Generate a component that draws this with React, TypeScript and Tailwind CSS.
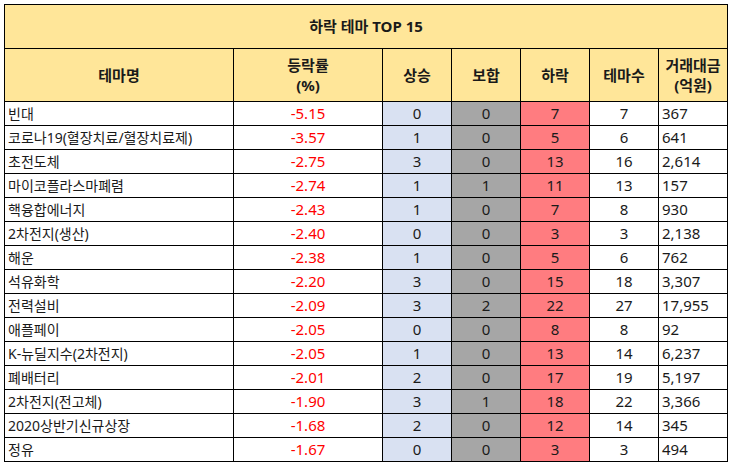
import React from "react";

type Row = { name: string; rate: string; up: number; flat: number; down: number; count: number; amount: string };

const rows: Row[] = [
  { name: "빈대", rate: "-5.15", up: 0, flat: 0, down: 7, count: 7, amount: "367" },
  { name: "코로나19(혈장치료/혈장치료제)", rate: "-3.57", up: 1, flat: 0, down: 5, count: 6, amount: "641" },
  { name: "초전도체", rate: "-2.75", up: 3, flat: 0, down: 13, count: 16, amount: "2,614" },
  { name: "마이코플라스마폐렴", rate: "-2.74", up: 1, flat: 1, down: 11, count: 13, amount: "157" },
  { name: "핵융합에너지", rate: "-2.43", up: 1, flat: 0, down: 7, count: 8, amount: "930" },
  { name: "2차전지(생산)", rate: "-2.40", up: 0, flat: 0, down: 3, count: 3, amount: "2,138" },
  { name: "해운", rate: "-2.38", up: 1, flat: 0, down: 5, count: 6, amount: "762" },
  { name: "석유화학", rate: "-2.20", up: 3, flat: 0, down: 15, count: 18, amount: "3,307" },
  { name: "전력설비", rate: "-2.09", up: 3, flat: 2, down: 22, count: 27, amount: "17,955" },
  { name: "애플페이", rate: "-2.05", up: 0, flat: 0, down: 8, count: 8, amount: "92" },
  { name: "K-뉴딜지수(2차전지)", rate: "-2.05", up: 1, flat: 0, down: 13, count: 14, amount: "6,237" },
  { name: "폐배터리", rate: "-2.01", up: 2, flat: 0, down: 17, count: 19, amount: "5,197" },
  { name: "2차전지(전고체)", rate: "-1.90", up: 3, flat: 1, down: 18, count: 22, amount: "3,366" },
  { name: "2020상반기신규상장", rate: "-1.68", up: 2, flat: 0, down: 12, count: 14, amount: "345" },
  { name: "정유", rate: "-1.67", up: 0, flat: 0, down: 3, count: 3, amount: "494" },
];

const cell = "border border-black h-[24px] p-0 leading-none text-[15px]";

export default function App() {
  return (
    <div className="w-[732px] h-[466px] bg-white pl-[4px] pt-[4px] text-[15px] text-[#1a1a1a] [font-family:'Noto_Sans','Noto_Sans_CJK_KR',sans-serif]">
      <table className="table-fixed border-collapse w-[724px]">
        <colgroup>
          <col className="w-[229px]" />
          <col className="w-[149px]" />
          <col className="w-[69px]" />
          <col className="w-[69px]" />
          <col className="w-[69px]" />
          <col className="w-[69px]" />
          <col className="w-[69px]" />
        </colgroup>
        <thead>
          <tr>
            <th colSpan={7} className="border border-black bg-[#FFE699] h-[44px] p-0 font-bold text-[15px]">하락 테마 TOP 15</th>
          </tr>
          <tr className="bg-[#FFE699] font-bold">
            <th className="border border-black h-[53px] p-0">테마명</th>
            <th className="border border-black p-0 leading-[20px]">등락률<br />(%)</th>
            <th className="border border-black p-0">상승</th>
            <th className="border border-black p-0">보합</th>
            <th className="border border-black p-0">하락</th>
            <th className="border border-black p-0">테마수</th>
            <th className="border border-black p-0 leading-[20px]">거래대금<br />(억원)</th>
          </tr>
        </thead>
        <tbody>
          {rows.map((r) => (
            <tr key={r.name}>
              <td className={`${cell} !text-[14px] pl-[3px] text-left`}>{r.name}</td>
              <td className={`${cell} text-center text-[#FF0000]`}>{r.rate}</td>
              <td className={`${cell} text-center bg-[#D9E1F2]`}>{r.up}</td>
              <td className={`${cell} text-center bg-[#A6A6A6]`}>{r.flat}</td>
              <td className={`${cell} text-center bg-[#FF7C80]`}>{r.down}</td>
              <td className={`${cell} text-center`}>{r.count}</td>
              <td className={`${cell} pl-[3px] text-left`}>{r.amount}</td>
            </tr>
          ))}
        </tbody>
      </table>
    </div>
  );
}
